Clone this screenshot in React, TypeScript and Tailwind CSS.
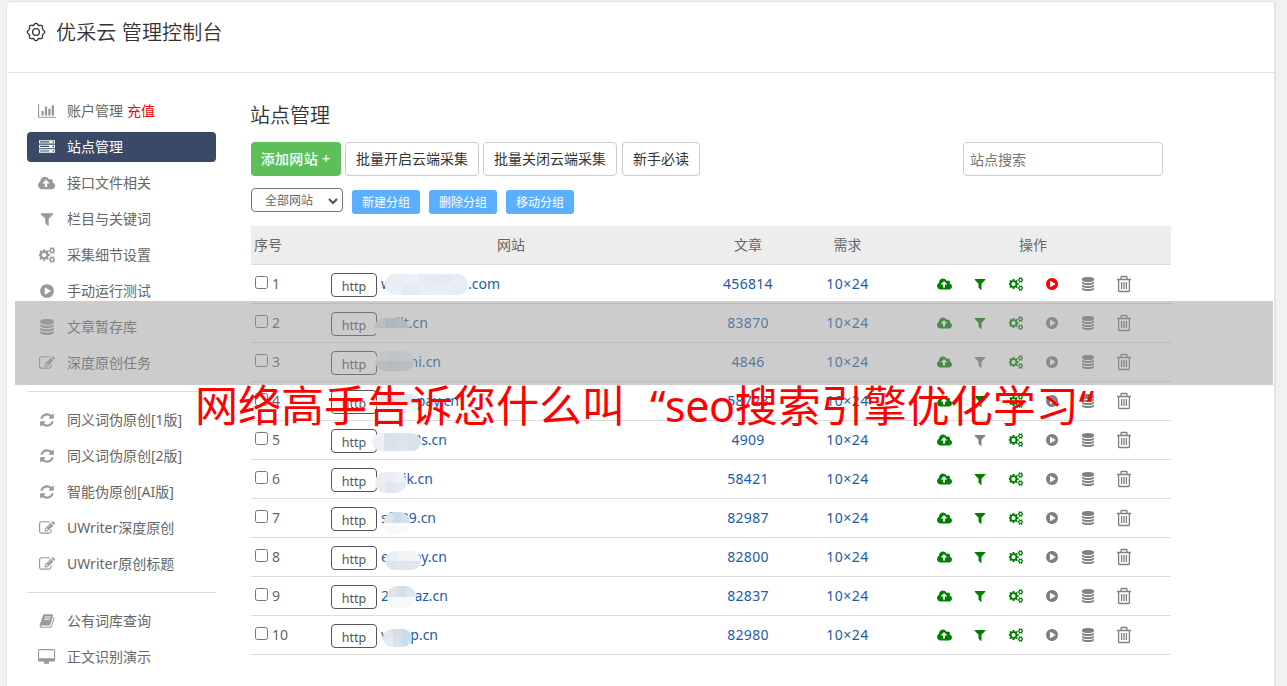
import type { ReactNode } from "react";

const paths = {
  chart: "M640 896v512h-256v-512h256zm384-512v1024h-256v-1024h256zm1024 1152v128h-2048v-1536h128v1408h1920zm-640-896v768h-256v-768h256zm384-384v1152h-256v-1152h256z",
  server: "M128 1408h1024v-128h-1024v128zm0-512h1024v-128h-1024v128zm1568 448q0-40-28-68t-68-28-68 28-28 68 28 68 68 28 68-28 28-68zm-1568-960h1024v-128h-1024v128zm1568 448q0-40-28-68t-68-28-68 28-28 68 28 68 68 28 68-28 28-68zm0-512q0-40-28-68t-68-28-68 28-28 68 28 68 68 28 68-28 28-68zm96 832v384h-1792v-384h1792zm0-512v384h-1792v-384h1792zm0-512v384h-1792v-384h1792z",
  upload: "M1280 928q0-14-9-23l-352-352q-9-9-23-9t-23 9l-351 351q-10 12-10 24 0 14 9 23t23 9h224v352q0 13 9.5 22.5t22.5 9.5h192q13 0 22.5-9.5t9.5-22.5v-352h224q13 0 22.5-9.5t9.5-22.5zm640 288q0 159-112.5 271.5t-271.5 112.5h-1088q-185 0-316.5-131.5t-131.5-316.5q0-130 70-240t188-165q-2-30-2-43 0-212 150-362t362-150q156 0 285.5 87t188.5 231q71-62 166-62 106 0 181 75t75 181q0 76-41 138 130 31 213.5 135.5t83.5 238.5z",
  filter: "M1595 295q17 41-14 70l-493 493v742q0 42-39 59-13 5-25 5-27 0-45-19l-256-256q-19-19-19-45v-486l-493-493q-31-29-14-70 17-39 59-39h1280q42 0 59 39z",
  cogs: "M832 896q0-106-75-181t-181-75-181 75-75 181 75 181 181 75 181-75 75-181zm768 512q0-52-38-90t-90-38-90 38-38 90q0 53 37.5 90.5t90.5 37.5 90.5-37.5 37.5-90.5zm0-1024q0-52-38-90t-90-38-90 38-38 90q0 53 37.5 90.5t90.5 37.5 90.5-37.5 37.5-90.5zm-384 421v185q0 10-7 19.5t-16 10.5l-155 24q-11 35-32 76 34 48 90 115 7 11 7 20 0 12-7 19-23 30-82.5 89.5t-78.5 59.5q-11 0-21-7l-115-90q-37 19-77 31-11 108-23 155-7 24-30 24h-186q-11 0-20-7.5t-10-17.5l-23-153q-34-10-75-31l-118 89q-7 7-20 7-11 0-21-8-144-133-144-160 0-9 7-19 10-14 41-53t47-61q-23-44-35-82l-152-24q-10-1-17-9.5t-7-19.5v-185q0-10 7-19.5t16-10.5l155-24q11-35 32-76-34-48-90-115-7-11-7-20 0-12 7-20 22-30 82-89t79-59q11 0 21 7l115 90q34-18 77-32 11-108 23-154 7-24 30-24h186q11 0 20 7.5t10 17.5l23 153q34 10 75 31l118-89q8-7 20-7 11 0 21 8 144 133 144 160 0 8-7 19-12 16-42 54t-45 60q23 48 34 82l152 23q10 2 17 10.5t7 19.5zm640 533v140q0 16-149 31-12 27-30 52 51 113 51 138 0 4-4 7-122 71-124 71-8 0-46-47t-52-68q-20 2-30 2t-30-2q-14 21-52 68t-46 47q-2 0-124-71-4-3-4-7 0-25 51-138-18-25-30-52-149-15-149-31v-140q0-16 149-31 13-29 30-52-51-113-51-138 0-4 4-7 4-2 35-20t59-34 30-16q8 0 46 46.5t52 67.5q20-2 30-2t30 2q51-71 92-112l6-2q4 0 124 70 4 3 4 7 0 25-51 138 17 23 30 52 149 15 149 31zm0-1024v140q0 16-149 31-12 27-30 52 51 113 51 138 0 4-4 7-122 71-124 71-8 0-46-47t-52-68q-20 2-30 2t-30-2q-14 21-52 68t-46 47q-2 0-124-71-4-3-4-7 0-25 51-138-18-25-30-52-149-15-149-31v-140q0-16 149-31 13-29 30-52-51-113-51-138 0-4 4-7 4-2 35-20t59-34 30-16q8 0 46 46.5t52 67.5q20-2 30-2t30 2q51-71 92-112l6-2q4 0 124 70 4 3 4 7 0 25-51 138 17 23 30 52 149 15 149 31z",
  play: "M896 128q209 0 385.5 103t279.5 279.5 103 385.5-103 385.5-279.5 279.5-385.5 103-385.5-103-279.5-279.5-103-385.5 103-385.5 279.5-279.5 385.5-103zm384 823q32-18 32-55t-32-55l-544-320q-31-19-64-1-32 19-32 56v640q0 37 32 56 16 8 32 8 17 0 32-9z",
  database: "M896 768q237 0 443-43t325-127v170q0 69-103 128t-280 93.5-385 34.5-385-34.5-280-93.5-103-128v-170q119 84 325 127t443 43zm0 768q237 0 443-43t325-127v170q0 69-103 128t-280 93.5-385 34.5-385-34.5-280-93.5-103-128v-170q119 84 325 127t443 43zm0-384q237 0 443-43t325-127v170q0 69-103 128t-280 93.5-385 34.5-385-34.5-280-93.5-103-128v-170q119 84 325 127t443 43zm0-1152q208 0 385 34.5t280 93.5 103 128v128q0 69-103 128t-280 93.5-385 34.5-385-34.5-280-93.5-103-128v-128q0-69 103-128t280-93.5 385-34.5z",
  edit: "M888 1184l116-116-152-152-116 116v56h96v96h56zm440-720q-16-16-33 1l-350 350q-17 17-1 33t33-1l350-350q17-17 1-33zm80 594v190q0 119-84.5 203.5t-203.5 84.5h-832q-119 0-203.5-84.5t-84.5-203.5v-832q0-119 84.5-203.5t203.5-84.5h832q63 0 117 25 15 7 18 23 3 17-9 29l-49 49q-14 14-32 8-23-6-45-6h-832q-66 0-113 47t-47 113v832q0 66 47 113t113 47h832q66 0 113-47t47-113v-126q0-13 9-22l64-64q15-15 35-7t20 29zm-96-738l288 288-672 672h-288v-288zm444 132l-92 92-288-288 92-92q28-28 68-28t68 28l152 152q28 28 28 68t-28 68z",
  refresh: "M1639 1056q0 5-1 7-64 268-268 434.5t-478 166.5q-146 0-282.5-55t-243.5-157l-129 129q-19 19-45 19t-45-19-19-45v-448q0-26 19-45t45-19h448q26 0 45 19t19 45-19 45l-137 137q71 66 161 102t187 36q134 0 250-65t186-179q11-17 53-117 8-23 30-23h192q13 0 22.5 9.5t9.5 22.5zm25-800v448q0 26-19 45t-45 19h-448q-26 0-45-19t-19-45 19-45l138-138q-148-137-349-137-134 0-250 65t-186 179q-11 17-53 117-8 23-30 23h-199q-13 0-22.5-9.5t-9.5-22.5v-7q65-268 270-434.5t480-166.5q146 0 284 55.5t245 156.5l130-129q19-19 45-19t45 19 19 45z",
  book: "M1703 478q40 57 18 129l-275 906q-19 64-76.5 107.5t-122.5 43.5h-923q-77 0-148.5-53.5t-99.5-131.5q-24-67-2-127 0-4 3-27t4-37q1-8-3-21.5t-3-19.5q2-11 8-21t16.5-23.5 16.5-23.5q23-38 45-91.5t30-91.5q3-10 .5-30t-.5-28q3-11 17-28t17-23q21-36 42-92t25-90q1-9-2.5-32t.5-28q4-13 22-30.5t22-22.5q19-26 42.5-84.5t27.5-96.5q1-8-3-25.5t-2-26.5q2-8 9-18t18-23 17-21q8-12 16.5-30.5t15-35 16-36 19.5-32 26.5-23.5 36-11.5 47.5 5.5l-1 3q38-9 51-9h761q74 0 114 56t18 130l-274 906q-36 119-71.5 153.5t-128.5 34.5h-869q-27 0-38 15-11 16-1 43 24 70 144 70h923q29 0 56-15.5t35-41.5l300-987q7-22 5-57 38 15 59 43zm-1064 2q-4 13 2 22.5t20 9.5h608q13 0 25.5-9.5t16.5-22.5l21-64q4-13-2-22.5t-20-9.5h-608q-13 0-25.5 9.5t-16.5 22.5zm-83 256q-4 13 2 22.5t20 9.5h608q13 0 25.5-9.5t16.5-22.5l21-64q4-13-2-22.5t-20-9.5h-608q-13 0-25.5 9.5t-16.5 22.5z",
  desktop: "M1792 992v-832q0-13-9.5-22.5t-22.5-9.5h-1600q-13 0-22.5 9.5t-9.5 22.5v832q0 13 9.5 22.5t22.5 9.5h1600q13 0 22.5-9.5t9.5-22.5zm128-832v1088q0 66-47 113t-113 47h-544q0 37 16 77.5t32 71 16 43.5q0 26-19 45t-45 19h-512q-26 0-45-19t-19-45q0-14 16-44t32-70 16-78h-544q-66 0-113-47t-47-113v-1088q0-66 47-113t113-47h1600q66 0 113 47t47 113z",
};

type IconName = keyof typeof paths;

const widths: Partial<Record<IconName, number>> = { chart: 2048, upload: 1920, cogs: 1856, desktop: 1920 };

function Icon({ name, size }: { name: IconName; size: number }) {
  const w = widths[name] ?? 1792;
  return (
    <svg viewBox={`0 0 ${w} 1792`} width={(size * w) / 1792} height={size} fill="currentColor" className="shrink-0">
      <path d={paths[name]} />
    </svg>
  );
}

function Trash() {
  return (
    <svg viewBox="0 0 16 18" className="mr-px h-[18px] w-4" fill="none" stroke="currentColor" strokeWidth="1.3">
      <path d="M1 4.5h14M5 4.3V2.2q0-.7.7-.7h4.6q.7 0 .7.7v2.1M2.6 4.7v11.1q0 .7.7.7h9.4q.7 0 .7-.7V4.7M5.6 7v7M8 7v7M10.4 7v7" />
    </svg>
  );
}

// scalloped outline with eight lobes
const gear = Array.from({ length: 96 }, (_, i) => {
  const a = (i / 96) * Math.PI * 2;
  const r = 7.9 + 0.75 * Math.cos(8 * a);
  return `${(10 + r * Math.cos(a)).toFixed(2)},${(10 + r * Math.sin(a)).toFixed(2)}`;
}).join(" ");

function Gear() {
  return (
    <svg viewBox="0 0 20 20" className="mt-[4px] -ml-px h-5 w-5" fill="none" stroke="#333" strokeWidth="1.3">
      <polygon points={gear} />
      <circle cx="10" cy="10" r="3.4" />
    </svg>
  );
}

const menu: { icon: IconName; label: string; extra?: string; active?: boolean }[][] = [
  [
    { icon: "chart", label: "账户管理", extra: "充值" },
    { icon: "server", label: "站点管理", active: true },
    { icon: "upload", label: "接口文件相关" },
    { icon: "filter", label: "栏目与关键词" },
    { icon: "cogs", label: "采集细节设置" },
    { icon: "play", label: "手动运行测试" },
    { icon: "database", label: "文章暂存库" },
    { icon: "edit", label: "深度原创任务" },
  ],
  [
    { icon: "refresh", label: "同义词伪原创[1版]" },
    { icon: "refresh", label: "同义词伪原创[2版]" },
    { icon: "refresh", label: "智能伪原创[AI版]" },
    { icon: "edit", label: "UWriter深度原创" },
    { icon: "edit", label: "UWriter原创标题" },
  ],
  [
    { icon: "book", label: "公有词库查询" },
    { icon: "desktop", label: "正文识别演示" },
  ],
];

// mask: left, top, width, height relative to the domain cell, then top and bottom tile colours
const sites = [
  { head: "w", tail: ".com", width: 119, count: "456814", filter: true, running: true, mask: [4, 9, 83, 21], tiles: ["#e9eef5", "#ebeff6", "#e6ecf5", "#e4eaf4", "#e9edf5", "#ebf0f6", "#e4ebf5", "#e9edf4", "#e9eff6", "#e7edf5"] },
  { head: "", tail: "ilt.cn", width: 47, count: "83870", filter: true, mask: [-7, 14, 34, 20], tiles: ["#dfe3e6", "#cbd6e6", "#d2dbe8", "#fafafa", "#fafafa", "#fafafa"] },
  { head: "", tail: "ni.cn", width: 60, count: "4846", filter: false, mask: [-6, 8, 39, 20], tiles: ["#f0f2f4", "#e9eef1", "#edf1f4", "#dae1e7", "#d6dee5", "#d8e1e9"] },
  { head: "", tail: "pay.cn", width: 78, count: "58723", filter: true, mask: [-5, 12, 43, 19], tiles: ["#e5eaf0", "#e1e7ef", "#dfe7f1", "#f3f5f8", "#f6f7f9", "#f4f6f8"] },
  { head: "", tail: "8s.cn", width: 66, count: "4909", filter: false, mask: [-9, 12, 49, 18], tiles: ["#eef1f5", "#d9e1ea", "#dae4f0", "#dce2ea", "#edf0f3", "#dbe2ea", "#dce5f0", "#dce3ea"] },
  { head: "", tail: "ik.cn", width: 52, count: "58421", filter: true, mask: [-6, 12, 31, 21], tiles: ["#eceff2", "#e9edf3", "#edf1f6", "#e9edf3", "#dfe6f0", "#e4eaf3"] },
  { head: "sf", tail: "39.cn", width: 55, count: "82987", filter: true, mask: [3, 13, 26, 22], tiles: ["#e0e5ea", "#cddce9", "#d1deeb", "#f8f9fa", "#fafafb", "#fafafb"] },
  { head: "e", tail: "oy.cn", width: 66, count: "82800", filter: true, mask: [4, 13, 36, 19], tiles: ["#ebeff4", "#f1f3f7", "#f3f5f8", "#dde4ed", "#dfe6ef", "#e1e7f1"] },
  { head: "2", tail: "az.cn", width: 67, count: "82837", filter: true, mask: [6, 9, 29, 22], tiles: ["#dfe5eb", "#d4dfe9", "#e0e6ee", "#f6f7f9", "#f8f9fb", "#f7f8fa"] },
  { head: "v", tail: "p.cn", width: 57, count: "82980", filter: true, mask: [2, 13, 29, 18], tiles: ["#e3e6ea", "#d3dee9", "#cbdcec", "#e7eaee", "#d8e2ec", "#cedeeb"] },
];

const cols = "grid grid-cols-[80px_360px_115px_84px_281px] items-center border-b border-[#ddd]";

function Outline({ children }: { children: ReactNode }) {
  return <button className="h-[34px] rounded border border-[#ccc] bg-white px-[10px] text-sm text-[#333]">{children}</button>;
}

function Sidebar() {
  return (
    <nav className="w-[189px] shrink-0 pt-[23px]">
      {menu.map((group, g) => (
        <ul key={g} className={`flex flex-col gap-[6px] ${g > 0 ? "mt-[13px] border-t border-[#ddd] pt-[13px]" : ""}`}>
          {group.map((item) => (
            <li key={item.label} className={`flex h-[30px] items-center rounded text-sm ${item.active ? "bg-[#3a4a66] text-white" : "text-[#666]"}`}>
              <span className={`flex w-10 justify-center ${item.active ? "text-white" : "text-[#999]"}`}>
                <Icon name={item.icon} size={16} />
              </span>
              <span>{item.label}</span>
              {item.extra && <span className="ml-1 text-[#f00]">{item.extra}</span>}
            </li>
          ))}
        </ul>
      ))}
    </nav>
  );
}

function SiteTable() {
  return (
    <div className="mt-[12px] text-sm text-[#666]">
      <div className={`${cols} h-[39px] bg-[#ededed]`}>
        <span className="pl-[3px]">序号</span>
        <span className="text-center">网站</span>
        <span className="pr-px text-center">文章</span>
        <span className="pr-px text-center">需求</span>
        <span className="pl-[129px]">操作</span>
      </div>
      {sites.map((s, i) => (
        <div key={s.count} className={`${cols} h-[39px] text-[#1b5ca8]`}>
          <label className="flex items-center gap-1 pl-1 text-[#666]">
            <input type="checkbox" className="mb-[3px] h-[13px] w-[13px]" />
            {i + 1}
          </label>
          <div className="flex items-center gap-1">
            <span className="mt-[2px] flex h-6 w-[46px] items-center justify-center rounded border border-[#555] pt-[3px] text-[12.5px] text-[#555]">http</span>
            <div className="relative flex h-[38px] items-center justify-between" style={{ width: s.width }}>
              <span>{s.head}</span>
              <span>{s.tail}</span>
              <div
                className="absolute grid grid-rows-2 overflow-hidden rounded-[10px]"
                style={{ left: s.mask[0], top: s.mask[1], width: s.mask[2], height: s.mask[3], gridTemplateColumns: `repeat(${s.tiles.length / 2}, 1fr)` }}
              >
                {s.tiles.map((c, n) => (
                  <i key={n} style={{ background: c }} />
                ))}
              </div>
            </div>
          </div>
          <span className="pr-px text-center tracking-[0.3px]">{s.count}</span>
          <span className="pr-px text-center tracking-[0.5px]">10×24</span>
          <div className="grid grid-cols-[repeat(6,36px)] items-center justify-items-center pl-[36px] text-[#808080]">
            <span className="text-[#008000]"><Icon name="upload" size={14} /></span>
            <span className={s.filter ? "text-[#008000]" : ""}><Icon name="filter" size={14} /></span>
            <span className="text-[#008000]"><Icon name="cogs" size={14} /></span>
            <span className={s.running ? "text-[#f00]" : ""}><Icon name="play" size={14} /></span>
            <Icon name="database" size={14} />
            <Trash />
          </div>
        </div>
      ))}
    </div>
  );
}

export default function App() {
  return (
    <div className="relative h-[686px] overflow-hidden bg-[#f1f1f1] pt-px pl-[6px] font-['Noto_Sans','Noto_Sans_CJK_SC',sans-serif]">
      <div className="h-[700px] w-[1270px] rounded-t border border-r-2 border-[#e4e4e4] bg-white">
        <header className="flex h-[71px] items-start border-b border-[#e4e4e4] pt-[16px] pl-[20px] text-[#333]">
          <Gear />
          <h1 className="ml-[10px] text-xl leading-[30px] font-[350] tracking-[0.15px]">优采云 管理控制台</h1>
        </header>
        <div className="flex pl-[20px]">
          <Sidebar />
          <main className="ml-[35px] w-[920px] pt-[28px]">
            <h2 className="-ml-px text-xl leading-[30px] font-[350] text-[#333]">站点管理</h2>
            <div className="mt-[11px] flex gap-1">
              <button className="h-[34px] w-[90px] rounded bg-[#5cbf5a] pr-px text-sm font-medium tracking-[0.3px] text-white">添加网站 +</button>
              <Outline>批量开启云端采集</Outline>
              <Outline>批量关闭云端采集</Outline>
              <div className="ml-px"><Outline>新手必读</Outline></div>
              <input placeholder="站点搜索" className="mr-2 ml-auto h-[34px] w-[200px] rounded border border-[#ccc] px-[6px] text-sm placeholder:text-[#757575]" />
            </div>
            <div className="mt-[12px] flex gap-[9px] text-xs">
              <div className="flex h-6 w-[92px] items-center justify-between rounded border border-[#767676] pt-px pr-[3px] pl-[13px] text-[#666]">
                全部网站
                <svg viewBox="0 0 12 8" className="w-3" fill="none" stroke="#555" strokeWidth="2.2">
                  <path d="M2 2l4 4 4-4" />
                </svg>
              </div>
              {["新建分组", "删除分组", "移动分组"].map((t) => (
                <button key={t} className="mt-[2px] h-6 w-[68px] rounded-[3px] bg-[#5aafff] pt-px text-white">{t}</button>
              ))}
            </div>
            <SiteTable />
          </main>
        </div>
      </div>
      <div className="absolute top-[301px] left-[15px] h-[84px] w-[1258px] bg-[#979797]/49" />
      <p className="absolute top-[376px] left-[195px] text-[43px] leading-[60px] whitespace-nowrap text-[#f00]">
        网络高手告诉您什么叫<span className="ml-[25px] tracking-[-0.4px]">“seo</span>搜索引擎优化学习“
      </p>
    </div>
  );
}
